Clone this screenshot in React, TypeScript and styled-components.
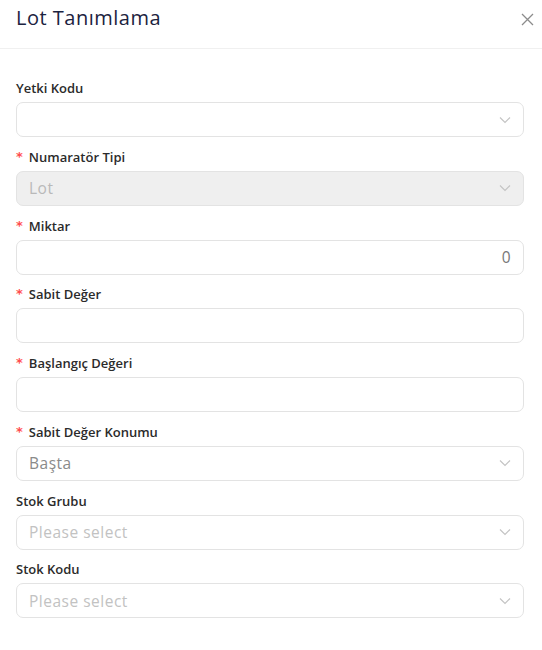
import React from "react";
import styled, { createGlobalStyle } from "styled-components";

const Global = createGlobalStyle`
  html, body { margin: 0; padding: 0; background: #fff; }
  body { font-family: "Open Sans", "Noto Sans", sans-serif; }
  * { box-sizing: border-box; }
`;

const Modal = styled.div`
  width: 542px;
  min-height: 650px;
  background: #fff;
`;

const Header = styled.div`
  height: 49px;
  border-bottom: 1px solid #f0f0f0;
  display: flex;
  align-items: flex-start;
  justify-content: space-between;
  padding: 6px 8px 0 16px;
`;

const Title = styled.h1`
  margin: 0;
  font-family: "Open Sans", sans-serif;
  font-size: 20px;
  line-height: 24px;
  font-weight: 400;
  color: #1c2340;
  letter-spacing: 0.5px;
`;

const Close = styled.button`
  border: none;
  background: none;
  padding: 0;
  width: 13px;
  height: 13px;
  margin-top: 7px;
  display: flex;
  align-items: center;
  justify-content: center;
  cursor: pointer;
`;

const Body = styled.div`
  padding: 29px 18px 0 16px;
  display: flex;
  flex-direction: column;
`;

const Field = styled.div`
  display: flex;
  flex-direction: column;
  margin-bottom: 9.75px;
`;

const Label = styled.label`
  font-family: "Open Sans", sans-serif;
  font-size: 13px;
  font-weight: 600;
  color: #2b2b2b;
  line-height: 20px;
  height: 20px;
  margin-bottom: 4px;
  display: flex;
  align-items: center;
`;

const Req = styled.span`
  color: #ff4d4f;
  font-family: "DejaVu Sans", sans-serif;
  font-size: 13px;
  margin-right: 6px;
  font-weight: 700;
`;

const Box = styled.div<{ $disabled?: boolean }>`
  height: 35px;
  border: 1px solid #e3e3e3;
  border-radius: 7px;
  background: ${(p) => (p.$disabled ? "#efefef" : "#fff")};
  display: flex;
  align-items: center;
  padding: 0 12px;
`;

const Value = styled.span<{ $tone: "placeholder" | "value" | "disabled" | "dark"; $right?: boolean }>`
  flex: 1;
  font-family: "Open Sans", sans-serif;
  font-size: 15.5px;
  letter-spacing: 0.5px;
  text-align: ${(p) => (p.$right ? "right" : "left")};
  color: ${(p) =>
    p.$tone === "placeholder"
      ? "#c2c2c2"
      : p.$tone === "disabled"
      ? "#b9b9b9"
      : p.$tone === "dark"
      ? "#777"
      : "#8a8a8a"};
`;

const Chevron = () => (
  <svg width="12" height="8" viewBox="0 0 12 8" fill="none">
    <path d="M1 1.5 L6 6.5 L11 1.5" stroke="#c4c4c4" strokeWidth="1.2" />
  </svg>
);

type F = {
  label: string;
  required?: boolean;
  value?: string;
  tone?: "placeholder" | "value" | "disabled" | "dark";
  select?: boolean;
  disabled?: boolean;
  right?: boolean;
};

const fields: F[] = [
  { label: "Yetki Kodu", select: true },
  { label: "Numaratör Tipi", required: true, value: "Lot", tone: "disabled", select: true, disabled: true },
  { label: "Miktar", required: true, value: "0", tone: "dark", right: true },
  { label: "Sabit Değer", required: true },
  { label: "Başlangıç Değeri", required: true },
  { label: "Sabit Değer Konumu", required: true, value: "Başta", tone: "value", select: true },
  { label: "Stok Grubu", value: "Please select", tone: "placeholder", select: true },
  { label: "Stok Kodu", value: "Please select", tone: "placeholder", select: true },
];

export default function App() {
  return (
    <>
      <Global />
      <Modal>
        <Header>
          <Title>Lot Tanımlama</Title>
          <Close aria-label="close">
            <svg width="13" height="13" viewBox="0 0 13 13">
              <path d="M1 1 L12 12 M12 1 L1 12" stroke="#8c8c8c" strokeWidth="1.3" />
            </svg>
          </Close>
        </Header>
        <Body>
          {fields.map((f) => (
            <Field key={f.label}>
              <Label>
                {f.required && <Req>*</Req>}
                {f.label}
              </Label>
              <Box $disabled={f.disabled}>
                <Value $tone={f.tone ?? "value"} $right={f.right}>
                  {f.value ?? ""}
                </Value>
                {f.select && <Chevron />}
              </Box>
            </Field>
          ))}
        </Body>
      </Modal>
    </>
  );
}
